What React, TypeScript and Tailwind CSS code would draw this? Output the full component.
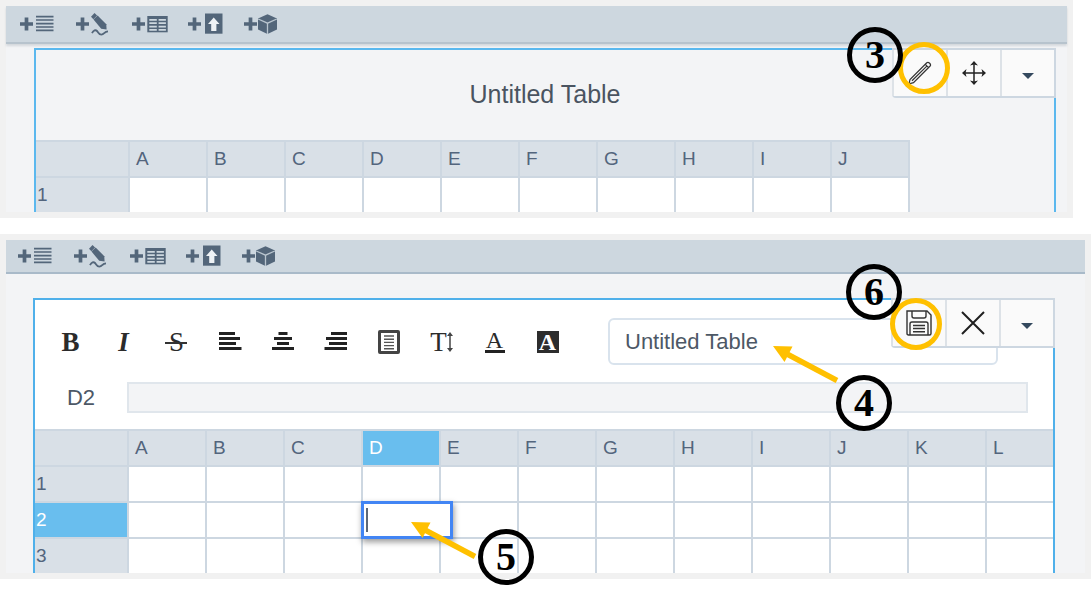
import { useState } from 'react'
import type { ReactNode } from 'react'

const INSERT_ITEMS = [
  {
    label: 'Add text',
    icon: <path d="M16 4.7h17.5M16 8h17.5M16 11.6h17.5M16 15h17.5M16 18.4h17.5" stroke="currentColor" strokeWidth="1.7" />
  },
  {
    label: 'Add drawing',
    icon: (
      <>
        <path d="M15 4.7 18.5 1l2.6 2.4-3.7 3.8z" fill="currentColor" />
        <path d="M17.5 7.6 21.6 3.6 30.300 12.2l.3 5.2-5.400-.6z" fill="currentColor" />
        <path d="M16 21.2c1.6-3 3.6-3.6 5-2.2 1.5 1.5 1.8 3.6 4.4 3.6 3 0 2.6-3 6.6-3.2" fill="none" stroke="currentColor" strokeWidth="1.8" />
      </>
    )
  },
  {
    label: 'Add table',
    icon: (
      <>
        <path d="M15.3 4h20.4v16.3H15.3z" fill="currentColor" />
        <path d="M17.3 7.8h7.5M26.6 7.8h7.3M17.3 11.2h7.5M26.6 11.2h7.3M17.3 14.6h7.5M26.6 14.6h7.3M17.3 17.9h7.5M26.6 17.9h7.3" stroke="#cdd7df" strokeWidth="1.8" />
      </>
    )
  },
  {
    label: 'Upload file',
    icon: (
      <>
        <path d="M17 1.5h17.5v20.2H17z" fill="currentColor" />
        <path d="M25.7 5.5 31.5 12h-3.1v7h-5.2v-7h-3.2z" fill="#eef2f5" />
      </>
    )
  },
  {
    label: 'Add object',
    icon: (
      <>
        <path d="M23.5 2.3 33 6.5v11L23.5 22 14 17.5v-11z" fill="currentColor" />
        <path d="M14.2 7l9.3 4.2L32.8 7M23.5 11.2V22" fill="none" stroke="#b9c5cf" strokeWidth="1.3" />
      </>
    )
  }
]

function InsertBar({ className }: { className: string }) {
  return (
    <div className={`flex items-center bg-[#cdd7df] text-[#53667a] ${className}`}>
      {INSERT_ITEMS.map((item) => (
        <button key={item.label} type="button" aria-label={item.label} className="w-14">
          <svg width="38" height="24" viewBox="0 0 38 24" className="block">
            <path d="M0 12h13M6.5 5.5v13" stroke="currentColor" strokeWidth="3.7" />
            {item.icon}
          </svg>
        </button>
      ))}
    </div>
  )
}

function Callout({ children, className }: { children: ReactNode; className: string }) {
  return (
    <span
      className={`absolute z-20 flex size-14 items-center justify-center rounded-full border-5 border-black font-['Liberation_Serif',serif] text-[40px] leading-none font-bold text-black ${className}`}
    >
      {children}
    </span>
  )
}

function Arrow({ className }: { className: string }) {
  return (
    <svg width="66" height="38" viewBox="0 0 66 38" className={`pointer-events-none absolute z-20 ${className}`}>
      <path d="M14 8 64 34.5" stroke="#ffc000" strokeWidth="5.5" />
      <path d="M0 0 19.5.5 11.5 16z" fill="#ffc000" />
    </svg>
  )
}

function ActionButton({ label, children }: { label: string; children: ReactNode }) {
  return (
    <button
      type="button"
      aria-label={label}
      className="flex w-[54px] items-center justify-center border-l-2 border-[#dde2e7] text-[#1f2328]"
    >
      {children}
    </button>
  )
}

function Caret() {
  return (
    <svg width="12" height="12" viewBox="0 0 12 12">
      <path d="M0 6h12L6 12z" fill="#34495e" />
    </svg>
  )
}

type SheetProps = {
  columns: string[]
  rows: number[]
  fill?: boolean
  activeColumn?: string
  activeRow?: number
}

function Sheet({ columns, rows, fill, activeColumn, activeRow }: SheetProps) {
  return (
    <table
      className={`table-fixed border-separate border-spacing-0 border-t-2 border-[#cdd7e1] text-[19px] leading-6 text-[#53657d] ${
        fill ? 'w-full' : 'w-[874px] border-r-2'
      }`}
    >
      <colgroup>
        <col className="w-[92px]" />
        {columns.map((column, index) => (
          <col key={column} className={fill && index === columns.length - 1 ? '' : 'w-[78px]'} />
        ))}
      </colgroup>
      <thead>
        <tr>
          <td className="h-9 border-b-2 border-[#cdd7e1] bg-[#d9e0e7]" />
          {columns.map((column) => (
            <th
              key={column}
              scope="col"
              className={`h-9 border-b-2 border-l-2 border-[#cdd7e1] pl-1.5 text-left font-normal ${
                column === activeColumn ? 'bg-[#69beee] text-white' : 'bg-[#d9e0e7]'
              }`}
            >
              {column}
            </th>
          ))}
        </tr>
      </thead>
      <tbody>
        {rows.map((row, index) => {
          const edge = index === rows.length - 1 ? 'h-[34px]' : 'h-9 border-b-2'
          return (
            <tr key={row}>
              <th
                scope="row"
                className={`border-[#cdd7e1] pl-px text-left font-normal ${edge} ${
                  row === activeRow ? 'bg-[#69beee] text-white' : 'bg-[#d9e0e7]'
                }`}
              >
                {row}
              </th>
              {columns.map((column) => (
                <td key={column} className={`relative border-l-2 border-[#cdd7e1] bg-white ${edge}`}>
                  {row === activeRow && column === activeColumn && (
                    <div className="absolute -top-0.5 -left-0.5 z-10 flex h-[38px] w-[92px] items-center border-3 border-[#4285f4] bg-white pl-0.5 shadow-[1px_3px_6px_rgba(0,0,0,0.4)]">
                      <span className="h-6 w-0.5 shrink-0 bg-[#5d6878]" />
                      <input aria-label="Cell D2" className="w-full min-w-0 outline-none" />
                    </div>
                  )}
                </td>
              ))}
            </tr>
          )
        })}
      </tbody>
    </table>
  )
}

function AlignIcon({ d }: { d: string }) {
  return (
    <svg width="24" height="20" viewBox="0 0 24 20">
      <path d={d} stroke="#222" strokeWidth="2.8" />
    </svg>
  )
}

const FORMAT_TOOLS = [
  { label: 'Bold', icon: <span className="font-bold">B</span> },
  { label: 'Italic', icon: <span className="font-bold italic">I</span> },
  {
    label: 'Strikethrough',
    icon: (
      <span className="relative">
        S
        <span className="absolute top-1/2 -left-1 h-0.5 w-[22px] bg-[#333]" />
      </span>
    )
  },
  { label: 'Align left', icon: <AlignIcon d="M1 1.5h16M1 6.5h21M1 11.5h17M1 16.5h22.5" /> },
  { label: 'Align center', icon: <AlignIcon d="M7.5 1.5h9M3 6.5h18M6 11.5h12M1 16.5h22" /> },
  { label: 'Align right', icon: <AlignIcon d="M7 1.5h16M2 6.5h21M5 11.5h18M.5 16.5H23" /> },
  {
    label: 'Wrap text',
    icon: (
      <svg width="22" height="24" viewBox="0 0 22 24">
        <rect x="1.5" y="1.5" width="19" height="21" rx=".5" fill="none" stroke="#444" strokeWidth="3" />
        <path d="M6 6h10M6 9.2h10M6 12.4h10M6 15.6h10M6 18.8h10" stroke="#555" strokeWidth="1.4" />
      </svg>
    )
  },
  {
    label: 'Font size',
    icon: (
      <span className="flex items-center">
        T
        <svg width="6" height="20" viewBox="0 0 6 20">
          <path d="M3 3v14" stroke="#444" strokeWidth="1.5" />
          <path d="M0 4 3 0l3 4zM0 16l3 4 3-4z" fill="#444" />
        </svg>
      </span>
    )
  },
  {
    label: 'Text color',
    icon: <span className="w-5 border-b-3 border-[#222] text-2xl leading-5">A</span>
  },
  {
    label: 'Fill color',
    icon: <span className="size-[22px] bg-[#2d2d2d] text-2xl leading-[22px] font-bold text-white">A</span>
  }
]

export default function App() {
  const [title, setTitle] = useState('Untitled Table')

  return (
    <main className="flex flex-col gap-4 bg-white pb-7 font-['Liberation_Sans',Arial,sans-serif]">
      {/* Table in view mode */}
      <section className="mr-[18px] border-6 border-[#f1f1f1] bg-[#f3f4f6]">
        <InsertBar className="h-[38px] border-b-2 border-[#b7c3cd] pl-3.5 shadow-[0_2px_2px_rgba(90,105,120,0.2)]" />
        <div className="relative mt-1 mr-[11px] ml-7 border-2 border-b-0 border-[#5bb8ee]">
          <h2 className="pt-[29px] pb-[31px] text-center text-[25px] leading-[30px] text-[#4a5461]">Untitled Table</h2>
          <Sheet columns={['A', 'B', 'C', 'D', 'E', 'F', 'G', 'H', 'I', 'J']} rows={[1]} />

          <div className="absolute -top-0.5 -right-0.5 flex h-[50px] rounded-bl border-y-2 border-r-2 border-[#cdd7e1] bg-[#fafafa]">
            <ActionButton label="Edit">
              <svg width="24" height="24" viewBox="0 0 24 24" fill="none" stroke="#333" strokeWidth="1.2">
                <path d="M1 22.8 2 18.5 18.800 1.800c1.600-1.500 4.800 1.500 3.300 3.200L5.500 21.600zM17.300 3.300l3.300 3.300M18.800 5.100 4 19.800" />
              </svg>
            </ActionButton>
            <ActionButton label="Move">
              <svg width="24" height="24" viewBox="0 0 24 24" fill="none" stroke="#222" strokeWidth="1.5">
                <path d="M12 2v20M2 12h20" />
                <path d="M12 0l4 4.5-4-1-4 1zM12 24l4-4.500-4 1-4-1zM0 12l4.500-4-1 4 1 4zM24 12l-4.500-4 1 4-1 4z" fill="#222" stroke="none" />
              </svg>
            </ActionButton>
            <ActionButton label="More options">
              <Caret />
            </ActionButton>
            <span className="absolute -top-2 left-1.5 size-[52px] rounded-full border-5 border-[#ffc000]" />
            <Callout className="-top-[23px] -left-[45px]">3</Callout>
          </div>
        </div>
      </section>

      {/* Table in edit mode */}
      <section className="border-6 border-[#f1f1f1] bg-[#f3f4f6]">
        <InsertBar className="h-[34px] border-b-2 border-[#a9bac9] pl-3" />
        <div className="relative mt-6 mr-[30px] ml-[27px] border-2 border-b-0 border-[#4fb0ea] bg-white">
          <div className="flex items-center pt-[18px] pr-[55px] pl-[9px]">
            <div className="flex shrink-0 font-['Liberation_Serif',serif] text-[27px] leading-8 text-[#2b2b2b]">
              {FORMAT_TOOLS.map((tool) => (
                <button key={tool.label} type="button" aria-label={tool.label} className="flex w-[53px] items-center justify-center">
                  {tool.icon}
                </button>
              ))}
            </div>
            <input
              aria-label="Table title"
              value={title}
              onChange={(e) => setTitle(e.target.value)}
              className="ml-[34px] h-[47px] min-w-0 flex-1 rounded-md border-2 border-[#d9e3ed] bg-white px-[15px] text-[22px] text-[#4d5866] outline-none"
            />
          </div>
          <div className="flex items-center pt-4 pr-[25px] pb-[15px]">
            <label htmlFor="formula" className="w-[92px] text-center text-[22px] text-[#4d5866]">
              D2
            </label>
            <input id="formula" className="h-[31px] min-w-0 flex-1 border-2 border-[#e0e6ec] bg-[#f3f4f6] px-2 outline-none" />
          </div>
          <Sheet
            columns={['A', 'B', 'C', 'D', 'E', 'F', 'G', 'H', 'I', 'J', 'K', 'L']}
            rows={[1, 2, 3]}
            fill
            activeColumn="D"
            activeRow={2}
          />

          <div className="absolute -top-0.5 -right-0.5 flex h-[50px] rounded-bl border-y-2 border-r-2 border-[#cdd7e1] bg-[#fafafa]">
            <ActionButton label="Save">
              <svg width="26" height="26" viewBox="0 0 26 26" fill="none" stroke="#333" strokeWidth="1.4">
                <path d="M1 1h20l4 4v18.5q0 1.5-1.5 1.5h-21Q1 25 1 23.500z" />
                <path d="M6 1v5q0 2 2 2h10q2 0 2-2V1M4 25V14q0-2 2-2h14q2 0 2 2v11M7 15.5h12M7 18.500h12M7 21.800h12" />
              </svg>
            </ActionButton>
            <ActionButton label="Cancel">
              <svg width="24" height="24" viewBox="0 0 24 24" fill="none" stroke="#1f1f1f" strokeWidth="2">
                <path d="M1 1l22 22M23 1 1 23" />
              </svg>
            </ActionButton>
            <ActionButton label="More options">
              <Caret />
            </ActionButton>
            <span className="absolute -top-0.5 -left-px size-[52px] rounded-full border-5 border-[#ffc000]" />
            <Callout className="-top-9 -left-[45px]">6</Callout>
          </div>

          <Arrow className="top-[46px] left-[738px]" />
          <Callout className="top-[75px] left-[801px]">4</Callout>
          <Arrow className="top-[222px] left-[376px]" />
          <Callout className="top-[229px] left-[443px]">5</Callout>
        </div>
      </section>
    </main>
  )
}
